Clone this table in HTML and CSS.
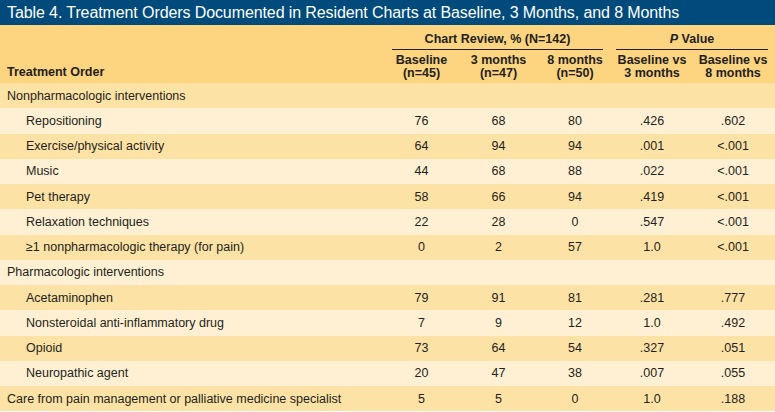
FILE: index.html
```html
<!DOCTYPE html>
<html>
<head>
<meta charset="utf-8">
<link rel="stylesheet" href="styles.css">
</head>
<body>
<div class="wrap">
  <div class="title">Table 4. Treatment Orders Documented in Resident Charts at Baseline, 3 Months, and 8 Months</div>
  <table class="tbl">
    <colgroup>
      <col class="c0"><col class="c1"><col class="c2"><col class="c3"><col class="c4"><col class="c5">
    </colgroup>
    <thead>
      <tr class="h1">
        <th class="lbl" rowspan="2">Treatment Order</th>
        <th colspan="3" class="grp grp-chart"><span>Chart Review, % (N=142)</span></th>
        <th colspan="2" class="grp grp-p"><span><i>P</i> Value</span></th>
      </tr>
      <tr class="h2">
        <th>Baseline<br>(n=45)</th>
        <th>3 months<br>(n=47)</th>
        <th>8 months<br>(n=50)</th>
        <th>Baseline vs<br>3 months</th>
        <th>Baseline vs<br>8 months</th>
      </tr>
    </thead>
    <tbody>
      <tr class="sec"><td class="name">Nonpharmacologic interventions</td><td></td><td></td><td></td><td></td><td></td></tr>
      <tr><td class="name sub">Repositioning</td><td>76</td><td>68</td><td>80</td><td>.426</td><td>.602</td></tr>
      <tr><td class="name sub">Exercise/physical activity</td><td>64</td><td>94</td><td>94</td><td>.001</td><td>&lt;.001</td></tr>
      <tr><td class="name sub">Music</td><td>44</td><td>68</td><td>88</td><td>.022</td><td>&lt;.001</td></tr>
      <tr><td class="name sub">Pet therapy</td><td>58</td><td>66</td><td>94</td><td>.419</td><td>&lt;.001</td></tr>
      <tr><td class="name sub">Relaxation techniques</td><td>22</td><td>28</td><td>0</td><td>.547</td><td>&lt;.001</td></tr>
      <tr><td class="name sub">≥1 nonpharmacologic therapy (for pain)</td><td>0</td><td>2</td><td>57</td><td>1.0</td><td>&lt;.001</td></tr>
      <tr class="sec"><td class="name">Pharmacologic interventions</td><td></td><td></td><td></td><td></td><td></td></tr>
      <tr><td class="name sub">Acetaminophen</td><td>79</td><td>91</td><td>81</td><td>.281</td><td>.777</td></tr>
      <tr><td class="name sub">Nonsteroidal anti-inflammatory drug</td><td>7</td><td>9</td><td>12</td><td>1.0</td><td>.492</td></tr>
      <tr><td class="name sub">Opioid</td><td>73</td><td>64</td><td>54</td><td>.327</td><td>.051</td></tr>
      <tr><td class="name sub">Neuropathic agent</td><td>20</td><td>47</td><td>38</td><td>.007</td><td>.055</td></tr>
      <tr><td class="name">Care from pain management or palliative medicine specialist</td><td>5</td><td>5</td><td>0</td><td>1.0</td><td>.188</td></tr>
    </tbody>
  </table>
</div>
</body>
</html>
```
FILE: styles.css
```css
html, body {
  margin: 0;
  padding: 0;
  background: #ffffff;
}
body {
  font-family: "Liberation Sans", Arial, sans-serif;
  color: #231f20;
}
.wrap {
  width: 775px;
}
.title {
  height: 25px;
  box-sizing: border-box;
  background: #004a7c;
  color: #ffffff;
  font-size: 16px;
  line-height: 25px;
  padding-left: 7px;
  white-space: nowrap;
  letter-spacing: -0.1px;
}
.tbl {
  width: 775px;
  border-collapse: collapse;
  table-layout: fixed;
  font-size: 12.5px;
}
.c0 { width: 383px; }
.c1 { width: 77px; }
.c2 { width: 77px; }
.c3 { width: 76px; }
.c4 { width: 78px; }
.c5 { width: 84px; }
.tbl th, .tbl td {
  padding: 0;
}
thead tr {
  background: #fdd47f;
}
thead th {
  font-weight: bold;
  text-align: center;
  line-height: 13px;
  vertical-align: bottom;
}
.h1 th.grp {
  height: 25px;
  vertical-align: bottom;
}
.grp span {
  display: block;
  border-bottom: 1px solid #231f20;
  padding-bottom: 3px;
  line-height: 14px;
}
.grp-chart span {
  margin: 0 10px 0 9px;
}
.grp-p span {
  margin: 0 7px 0 3px;
}
.h2 th {
  height: 33px;
  padding-bottom: 3px;
  box-sizing: border-box;
}
.h1 th.lbl {
  text-align: left;
  padding-left: 7px;
  padding-bottom: 4px;
}
tbody tr {
  height: 25.25px;
}
tbody tr:nth-child(odd) {
  background: #fde2a6;
}
tbody tr:nth-child(even) {
  background: #fff0d3;
}
tbody td {
  text-align: center;
  vertical-align: middle;
  line-height: 14px;
}
tbody td.name {
  text-align: left;
  padding-left: 7px;
}
tbody td.name.sub {
  padding-left: 26px;
}
```
